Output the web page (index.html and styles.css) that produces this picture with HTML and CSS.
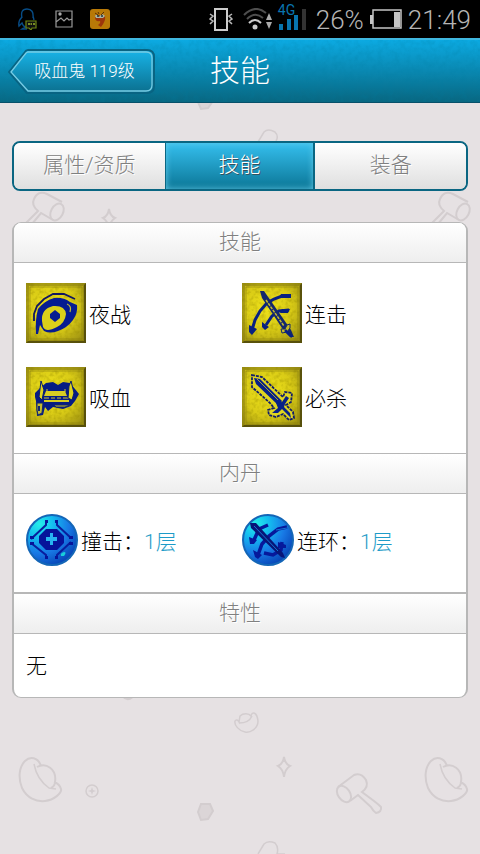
FILE: index.html
```html
<!DOCTYPE html>
<html lang="zh-CN">
<head>
<meta charset="utf-8">
<meta name="viewport" content="width=device-width, initial-scale=1">
<title>技能</title>
<link rel="stylesheet" href="styles.css">
</head>
<body>
<svg class="doodles" aria-hidden="true">
  <defs>
    <g id="ingot"><path d="M41 766C38 757 30 756 25 761C19 767 18 778 22 788C27 798 36 802 45 801C54 800 62 793 61 789C60 785 57 783 54 782M37 767C46 762 57 769 55 782C55 785 53 787 51 788"/><path d="M34 764C36 775 42 783 49 788L56 789" stroke-width="1.500"/></g>
    <g id="hammer"><path d="M338 787L354 775Q361 772 366 780Q369 787 362 792L374 801Q378 804 381 807Q382 812 376 813Q373 811 371 807L358 795L350 801"/><ellipse cx="344" cy="794" rx="6" ry="9" transform="rotate(-35 344 794)"/></g>
    <g id="mallet"><path d="M25 224L38 211Q31 205 34 199Q38 190 47 194L62 202M32 224L41 213L53 220"/><ellipse cx="57" cy="212" rx="6" ry="9" transform="rotate(28 57 212)"/></g>
    <path id="spark" d="M284 757Q285 764 290 766Q285 769 284 777Q283 769 278 766Q283 764 284 757Z"/>
  </defs>
  <use href="#ingot"/><use href="#ingot" x="406"/>
  <use href="#hammer"/><use href="#mallet"/><use href="#mallet" x="406"/>
  <use href="#spark"/><use href="#spark" x="-175" y="-548"/>
  <path stroke-width="1.500" d="M240 716C243 713 249 713 251 716C252 711 257 712 258 721C258 729 250 733 245 732C239 731 234 725 235 721C236 719 238 720 239 722ZM239 723Q249 723 252 716"/>
  <circle cx="92" cy="791" r="6" stroke-width="1.500"/><path class="solid" d="M92 787L93 790L96 791L93 792L92 795L91 792L88 791L91 790Z"/>
  <path class="gem" d="M201 804H210L213 811L208 819L201 820L198 812Z"/>
  <path class="gem" d="M201 94H210L213 101L208 108L201 109L198 102Z"/>
  <path stroke-width="1.500" d="M258 142L264 132Q268 128 275 132Q279 136 276 141M258 854L264 844Q268 840 275 843Q279 847 277 854H285"/>
  <path class="solid" d="M122 697Q127 703 133 698Z"/>
</svg>

<div class="status">
  <div class="status-group apps">
    <svg width="20" height="22" viewBox="0 0 20 22" role="img" aria-label="QQ"><path d="M4 10Q2 1 9 1Q16 1 15 10M4 9Q0 13 1 18L4 15Q5 18 7 19L4 21H9M15 8L16 12" fill="none" stroke="#074c86" stroke-width="1.4"/><path d="M8 13H18V20H14L13 22L11 20H8Z" fill="#111" stroke="#6d8515" stroke-width="1.2"/><path d="M10 16H12M12.500 16H14M15 16H17" stroke="#9ab42c" stroke-width="1.5"/></svg>
    <svg width="18" height="18" viewBox="0 0 18 18" role="img" aria-label="图片"><path d="M1 1H17V17H1ZM1 12L6 8L9 11L12 8L14 10L17 9" fill="none" stroke="#9a9a9a" stroke-width="1.200"/><circle cx="5" cy="4" r="1.700" fill="#aaa"/></svg>
    <svg width="20" height="20" viewBox="0 0 20 20" role="img" aria-label="应用"><rect width="20" height="20" rx="3" fill="#b87907"/><path d="M5 8Q9 5 15 7Q16 12 11 18L8 16Q11 14 10 12Q5 13 5 8Z" fill="#9c350b"/><path d="M5 7Q7 4 9 8Q12 3 15 7L13 9H6Z" fill="#aab5a5"/><path d="M5 4L8 6M11 6L14 3M8 3L9 5" stroke="#5a3007"/><circle cx="8" cy="7" r="1" fill="#253638"/><circle cx="12" cy="7" r="1" fill="#253638"/></svg>
  </div>
  <div class="status-group system">
    <svg width="24" height="24" viewBox="0 0 24 24" role="img" aria-label="振动"><path d="M6 2H18V23H6Z" fill="none" stroke="#ccc" stroke-width="2"/><path d="M1 7L4 9L1 12L4 14L1 17M23 7L20 9L23 12L20 14L23 17" fill="none" stroke="#bbb" stroke-width="1.500"/></svg>
    <svg class="wifi" width="29" height="22" viewBox="0 0 29 22" role="img" aria-label="无线网络"><path d="M1 7Q12-4 23 5M4 11Q12 3 20 10" fill="none" stroke="#4e4e4e" stroke-width="2"/><path d="M6 15Q12 9 18 15" fill="none" stroke="#ccc" stroke-width="2"/><circle cx="12" cy="19" r="2.500" fill="#ccc"/><path d="M26 5L29 12H23ZM23 14H29L26 21Z" fill="#aaa"/></svg>
    <div class="signal"><svg width="28" height="24" viewBox="0 0 28 24" role="img" aria-label="信号"><path d="M1 18H5V24H1ZM9 13H13V24H9ZM16 9H20V24H16Z" fill="#0875af"/><path d="M24 3H28V24H24Z" fill="#333"/></svg><span class="net">4G</span></div>
    <span class="percent">26%</span>
    <svg class="battery" width="32" height="20" viewBox="0 0 32 20" role="img" aria-label="电池"><path d="M3 1H31V19H3Z" fill="none" stroke="#c5c5c5" stroke-width="1.500"/><path d="M0 6H3V15H0ZM24 3H30V18H24Z" fill="#c5c5c5"/></svg>
    <time>21:49</time>
  </div>
</div>

<header class="bar">
  <svg class="grain" aria-hidden="true"><filter id="noise"><feTurbulence type="fractalNoise" baseFrequency=".18" numOctaves="3" seed="4"/><feColorMatrix values="0 0 0 0 0  0 0 0 0 .2  0 0 0 0 .35  1.500 0 0 0 -.6"/></filter><rect width="100%" height="100%" filter="url(#noise)"/></svg>
  <button class="back" type="button">
    <svg width="147" height="45" viewBox="0 0 147 45" aria-hidden="true"><defs><linearGradient id="backFill" x2="0" y2="1"><stop stop-color="#18b4e8"/><stop offset="1" stop-color="#0b6f8e"/></linearGradient></defs><path d="M20 1H139Q146 1 146 8V37Q146 44 139 44H19L1 23L17 3Q18 1 20 1Z" fill="url(#backFill)" stroke="#086483" stroke-width="2"/><path d="M20 3H138Q144 3 144 9V36Q144 42 138 42H20L3 23L18 4Z" fill="none" stroke="#77cbe3" stroke-width="1.300"/></svg>
    <span>吸血鬼 119级</span>
  </button>
  <h1>技能</h1>
</header>

<main>
  <nav class="tabs" aria-label="宠物信息">
    <button type="button">属性/资质</button>
    <button type="button" class="active" aria-current="page">技能</button>
    <button type="button">装备</button>
  </nav>

  <div class="card">
    <section>
      <h2>技能</h2>
      <ul class="grid skills">
        <li>
          <svg class="rune" viewBox="0 0 60 60" aria-hidden="true">
            <defs>
              <radialGradient id="gold" cx=".42" cy=".4" r=".75"><stop stop-color="#f0e41a"/><stop offset=".55" stop-color="#d8ca16"/><stop offset="1" stop-color="#9a8e12"/></radialGradient>
              <filter id="grit"><feTurbulence type="fractalNoise" baseFrequency=".25" numOctaves="2" seed="8"/><feColorMatrix values="0 0 0 0 .3  0 0 0 0 .25  0 0 0 0 0  1 0 0 0 -.42"/></filter>
              <g id="plate"><path fill="url(#gold)" d="M0 0H60V60H0Z"/><path filter="url(#grit)" d="M0 0H60V60H0Z"/><path fill="#817710" d="M0 0H3V57L0 60ZM60 0V60H0L4 57H57V3H0V0Z" opacity=".55"/><path fill="#4a430a" d="M58 2L60 0V60H0L2 58H58Z" opacity=".8"/><path d="M4 4H56V56H4Z" fill="none" stroke="#8b8013" opacity=".6"/></g>
            </defs>
            <use href="#plate"/>
            <path d="M8 38V31L11 23L18 16L27 11L38 11L49 16" fill="none" stroke="#11165f" stroke-width="1.800"/><path d="M10 51Q9 37 12 26Q18 18 28 15Q37 14 44 19L51 22Q52 30 47 37Q41 45 32 48Q24 51 18 48L14 42L12 51Z" fill="#061c91"/><path d="M16 38Q15 26 27 23Q39 22 40 31Q39 40 31 44Q20 50 17 44Z" fill="#dbd01a"/><path d="M29 27L34 31V35L29 39L24 35V31Z" fill="#061c91"/><path d="M41 21Q46 23 44 29" fill="none" stroke="#c2ba38" stroke-width="1.200"/>
          </svg><span>夜战</span>
        </li>
        <li>
          <svg class="rune" viewBox="0 0 60 60" aria-hidden="true"><use href="#plate"/><path d="M49 13H40L32 16L25 20L18 28L13 37L10 47" fill="none" stroke="#082181" stroke-width="3"/><path d="M39 11H49V15H37ZM7 42L11 44L15 46L10 52L7 49Z" fill="#082181"/><path d="M47 27L37 28L30 33L24 42" fill="none" stroke="#082181" stroke-width="3"/><path d="M40 26H48L46 30H38ZM20 39L27 44L23 47L20 44Z" fill="#082181"/><path d="M18 8L22 8L49 47L52 54H48L42 48L20 15Z" fill="#13276d"/><path d="M24 17L42 43" stroke="#c2b82e" stroke-width="1.500" stroke-dasharray="3 1"/><path d="M39 46H43L45 42L48 41V45L45 49L40 50Z" fill="#c8bd24" stroke="#13276c"/><path d="M43 47L50 54" stroke="#082181" stroke-width="2.500"/></svg><span>连击</span>
        </li>
        <li>
          <svg class="rune" viewBox="0 0 60 60" aria-hidden="true"><use href="#plate"/><path d="M9 26L14 21L20 16L27 15L32 18L37 15L44 16L49 22L53 27L49 34L45 39L37 42L27 40L22 44L19 40L17 48L11 49L10 34L9 30Z" fill="#061c83"/><path d="M20 24H39L41 29H18ZM18 33H43V35H18Z" fill="#d8cd23"/><path d="M21 22V25M39 25V22M18 31H43" fill="none" stroke="#d0c530"/><path d="M24 29V33M30 29V33M36 29V33" stroke="#061c83" stroke-width="2"/><path d="M15 14L18 23L16 33L13 30ZM45 14L48 26L46 33L42 31L43 19Z" fill="#ded31e" stroke="#061c72"/><path d="M11 36L17 36L16 46L12 48L11 43ZM28 38H44L39 40H30Z" fill="#c3bb30" stroke="#13276c"/><path d="M13 39V44" stroke="#13276c" stroke-width="2"/></svg><span>吸血</span>
        </li>
        <li>
          <svg class="rune" viewBox="0 0 60 60" aria-hidden="true"><use href="#plate"/><path d="M10 8L20 10L41 30L43 25L50 26L49 35L44 38L51 45L52 51L47 53L41 47L34 50L27 48L26 43L32 41L28 36L10 20Z" fill="#e0d520" stroke="#111d69" stroke-width="1.800" stroke-dasharray="3 1"/><path d="M12 11L18 12L40 34L37 39L14 17Z" fill="#082188"/><path d="M15 12L36 33" stroke="#d0c520" stroke-width=".8"/><path d="M34 36L40 35L44 29L47 31L43 37L42 40L48 46L49 51L40 42L36 46L30 46L36 41Z" fill="#082188"/></svg><span>必杀</span>
        </li>
      </ul>
    </section>

    <section>
      <h2>内丹</h2>
      <ul class="grid cores">
        <li>
          <svg class="orb" viewBox="0 0 52 52" aria-hidden="true">
            <defs><radialGradient id="blue" cx=".25" cy=".18" r=".9"><stop stop-color="#25efe9"/><stop offset=".3" stop-color="#14bdf0"/><stop offset=".65" stop-color="#1879e5"/><stop offset="1" stop-color="#0743b5"/></radialGradient></defs>
            <circle cx="26" cy="26" r="25" fill="url(#blue)" stroke="#1466b7" stroke-width="2"/><path d="M35 42Q34 39 38 38Q41 38 38 42Z" fill="#19ced9"/>
            <path d="M20 7V11L5 25M31 7V11L45 24M5 29L20 41V45M31 45V41L45 28" fill="none" stroke="#081e9e" stroke-width="2"/><path d="M19 6H22V9H19ZM29 6H32V9H29ZM4 22H8V25H4ZM43 22H47V25H43ZM4 28H8V31H4ZM43 28H47V31H43ZM19 42H22V45H19ZM29 42H32V45H29ZM20 15H31L38 22V29L31 36H20L13 29V22Z" fill="#06149a"/><path d="M24 19H27V23H31V27H27V31H24V27H20V23H24Z" fill="#28b5f1"/>
          </svg><span>撞击：<b>1层</b></span>
        </li>
        <li>
          <svg class="orb" viewBox="0 0 52 52" aria-hidden="true"><circle cx="26" cy="26" r="25" fill="url(#blue)" stroke="#1466b7" stroke-width="2"/><path d="M45 13L36 15L27 22L20 30L16 41M26 11L17 15L12 26M40 28L39 36L31 41L22 39" fill="none" stroke="#06199b" stroke-width="3.500"/><path d="M7 23L15 26L12 30H8ZM11 36L20 41L16 45L13 43ZM36 28L44 31V34H36Z" fill="#06199b"/><path d="M8 9H14L41 39L43 44L39 43L9 14Z" fill="#071578"/><path d="M12 12L36 37M34 16L45 14" stroke="#1474d2"/></svg><span>连环：<b>1层</b></span>
        </li>
      </ul>
    </section>

    <section class="traits">
      <h2>特性</h2>
      <p>无</p>
    </section>
  </div>
</main>
</body>
</html>
```

FILE: styles.css
```css
* {
  box-sizing: border-box;
}

body {
  margin: 0;
  min-height: 100vh;
  background: #e6e1e3;
  color: #000;
  font-family: Roboto, "Noto Sans CJK SC", sans-serif;
  font-weight: 300;
  font-size: 21px;
  line-height: 32px;
}

button {
  font: inherit;
  border: 0;
  padding: 0;
  background: none;
  cursor: pointer;
}

h1, h2, p, ul {
  margin: 0;
  padding: 0;
  font-weight: inherit;
}

.doodles {
  position: absolute;
  top: 0;
  left: 0;
  width: 100%;
  height: 854px;
  z-index: -1;
  fill: none;
  stroke: #d3cdcf;
  stroke-width: 2;
}

.doodles .solid {
  fill: #d3cdcf;
  stroke: none;
}

.doodles .gem {
  fill: #dbd5d7;
  stroke-width: 2;
}

.status {
  display: flex;
  justify-content: space-between;
  align-items: center;
  height: 38px;
  padding: 0 9px 0 18px;
  background: #000;
  color: #b5b5b5;
  font-size: 26px;
}

.status-group {
  display: flex;
  align-items: center;
}

.status time,
.percent {
  padding-top: 2px;
}

.apps {
  gap: 17px;
}

.system {
  gap: 6px;
}

.wifi {
  margin-left: 4px;
}

.signal {
  position: relative;
  display: flex;
  margin: 0 4px 2px 0;
}

.net {
  position: absolute;
  top: -4px;
  left: 0;
  color: #0875af;
  font-size: 14px;
  font-weight: 400;
  line-height: 16px;
}

.bar {
  position: relative;
  display: grid;
  grid-template-columns: 1fr auto 1fr;
  align-items: center;
  height: 65px;
  padding: 0 8px;
  border-top: 2px solid #40b8e0;
  border-bottom: 1px solid #07506a;
  background: linear-gradient(#0caae2, #086781);
  color: #fff;
}

.grain {
  position: absolute;
  width: 100%;
  height: 100%;
  opacity: 0.3;
}

.bar h1 {
  position: relative;
  font-size: 30px;
  line-height: 40px;
}

.back {
  position: relative;
  display: grid;
  justify-self: start;
  place-items: center;
  color: #fff;
  font-size: 17px;
}

.back > * {
  grid-area: 1 / 1;
}

.back span {
  padding-left: 6px;
}

main {
  padding: 38px 12px;
}

.tabs {
  display: grid;
  grid-template-columns: repeat(3, 1fr);
  height: 50px;
  margin-bottom: 31px;
  border: 2px solid #0a6682;
  border-radius: 8px;
  overflow: hidden;
}

.tabs button {
  padding-bottom: 2px;
  background: linear-gradient(#fff, #dfdfdf);
  color: #808080;
  text-shadow: 1px 1px 0 #fff;
}

.tabs .active {
  border-left: 1px solid #0a6682;
  border-right: 2px solid #0a6682;
  background: linear-gradient(#35bfee, #0b7696);
  box-shadow: inset 0 0 6px #62c9e8;
  color: #fff;
  text-shadow: 1px 1px 0 #35505c;
}

.card {
  border: solid #b7b7b7;
  border-width: 1px 2px;
  border-radius: 9px;
  background: #fff;
  overflow: hidden;
}

h2 {
  height: 40px;
  border-bottom: 1px solid #b7b7b7;
  background: linear-gradient(#fff, #eee);
  color: #808080;
  font-size: 21px;
  line-height: 38px;
  text-align: center;
  text-shadow: 1px 1px 0 #fff;
}

section + section h2 {
  height: 41px;
  border-top: 1px solid #b7b7b7;
}

section.traits h2 {
  height: 42px;
  border-top-width: 2px;
}

.grid {
  display: grid;
  grid-template-columns: 1fr 1fr;
  list-style: none;
}

.grid li {
  display: flex;
  align-items: center;
  gap: 3px;
}

.grid span {
  padding-top: 4px;
}

.skills {
  row-gap: 24px;
  padding: 20px 8px 26px 12px;
}

.cores {
  padding: 20px 8px 26px 12px;
}

.rune {
  width: 60px;
  height: 60px;
}

.orb {
  width: 52px;
  height: 52px;
}

b {
  color: #1e9bc8;
  font-weight: inherit;
}

p {
  padding: 16px 12px 15px;
}
```
